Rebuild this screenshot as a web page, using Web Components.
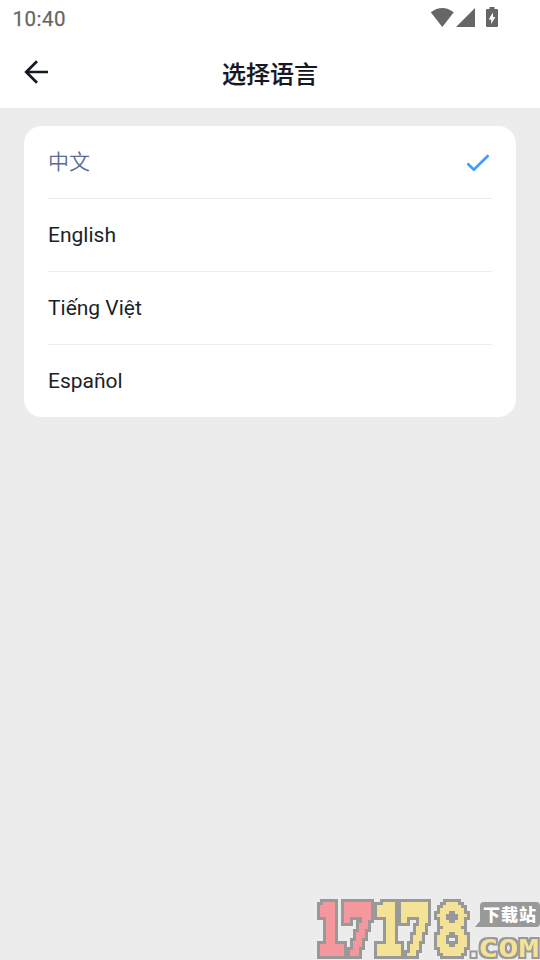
<!DOCTYPE html>
<html lang="zh"><head><meta charset="utf-8"><title>选择语言</title>
<style>html,body{margin:0;height:100%;overflow:hidden;background:#ececec}</style></head>
<body><language-screen></language-screen>
<script>
const define = (name, html) => customElements.define(name, class extends HTMLElement {
  constructor() {
    super();
    const t = document.createElement('template');
    t.innerHTML = html;
    this.attachShadow({mode: 'open'}).append(t.content.cloneNode(true));
  }
});

define('status-bar', `<style>
:host{display:flex;height:36px;box-sizing:border-box;padding:0 41px 0 12px;align-items:center;justify-content:space-between;background:#fff;color:#666}
span{font:400 20.5px/36px Roboto,sans-serif;letter-spacing:.5px;padding:1px 0 0 .5px;-webkit-text-stroke:.25px #666}
svg{display:block;margin-top:-1px}
</style><span>10:40</span>
<svg width="69" height="24" viewBox="430 6 69 24" fill="#666"><path d="M430.8 12.2Q442.3 3.6 453.8 12.2L442.3 27Z"/><path d="M475 8V27H456Z"/>
<path fill-rule="evenodd" d="M489.5 7h5v2h2.4q1.1 0 1.1 1.1v15.7q0 1.2-1.1 1.2h-9.8q-1.1 0-1.1-1.2V10.100q0-1.100 1.100-1.100h2.400zM493 12.500l-4.400 7h2.600v4.500l4.200-7h-2.400z"/></svg>`);

define('title-bar', `<style>
:host{display:grid;grid-template-columns:72px 1fr 72px;height:72px;align-items:center;background:#fff;color:#141824}
svg{display:block;margin-left:24px}
h1{margin:0;text-align:center;font:500 24px/36px Roboto,"Noto Sans CJK SC",sans-serif;padding-top:6px;-webkit-text-stroke:.2px #141824}
</style><svg width="25" height="24" viewBox="0 0 25 24" fill="none" stroke="#141824" stroke-width="2.700"><path d="M24 12H2M13 1.200L2.200 12L13 22.800"/></svg><h1><slot></slot></h1>`);

define('language-option', `<style>
:host{display:flex;height:72px;align-items:center;justify-content:space-between;border-bottom:1px solid #ececec;color:#1b1f29;font:400 21px/30px Roboto,"Noto Sans CJK SC",sans-serif}
:host(:last-child){border-bottom:0}
:host([selected]){color:#576b95;font-weight:350}
svg{display:none;margin:1px 2.500px 0 0}
:host([selected]) svg{display:block}
</style><span><slot></slot></span><svg width="24" height="20" viewBox="0 0 24 20" fill="none" stroke="#3f9bff" stroke-width="2.700"><path d="M1.500 10.500L7.800 16.700L22.500 2.200"/></svg>`);

define('language-list', `<style>
:host{display:block;margin:18px 24px;padding:0 24px;background:#fff;border-radius:18px}
</style><slot></slot>`);

define('site-mark', `<style>
:host{position:absolute;right:0;bottom:0;width:226px;height:64px}
svg{display:block}
.n{font:700 70px "DejaVu Serif",serif;stroke-width:4px}
.n .m{font-family:"DejaVu Sans Mono",monospace;stroke-width:4px}
.c{font:700 25px "DejaVu Sans Mono",monospace}
.s{font:900 17px "Noto Sans CJK SC",sans-serif;fill:#fff}
.r{fill:#f4989e;stroke:#f4989e}
.y{fill:#f4e397;stroke:#f4e397}
</style><svg width="226" height="64" viewBox="314 896 226 64">
<defs>
<filter id="px3" filterUnits="userSpaceOnUse" x="314" y="896" width="226" height="64" color-interpolation-filters="sRGB">
<feFlood x="315" y="897" width="1" height="1" flood-color="#000"/><feOffset x="314" y="896" width="3" height="3" result="cell"/><feTile in="cell" result="grid"/>
<feComponentTransfer in="SourceGraphic" result="solid"><feFuncA type="discrete" tableValues="0 1"/></feComponentTransfer>
<feComposite in="solid" in2="grid" operator="in"/><feMorphology operator="dilate" radius="1" result="face"/>
<feMorphology in="face" operator="dilate" radius="3" result="wide"/><feFlood flood-color="#999"/><feComposite in2="wide" operator="in" result="edge"/>
<feMerge><feMergeNode in="edge"/><feMergeNode in="face"/></feMerge></filter>
<filter id="edge2" filterUnits="userSpaceOnUse" x="314" y="896" width="226" height="64" color-interpolation-filters="sRGB">
<feMorphology in="SourceAlpha" operator="dilate" radius="2" result="wide"/><feFlood flood-color="#999"/><feComposite in2="wide" operator="in" result="edge"/>
<feMerge><feMergeNode in="edge"/><feMergeNode in="SourceGraphic"/></feMerge></filter>
</defs>
<g class="n" filter="url(#px3)"><text class="r m" x="316" y="955" textLength="29" lengthAdjust="spacingAndGlyphs">1</text><text class="r" x="341" y="955" textLength="33" lengthAdjust="spacingAndGlyphs">7</text><text class="y m" x="374" y="955" textLength="29" lengthAdjust="spacingAndGlyphs">1</text><text class="y" x="399" y="955" textLength="33" lengthAdjust="spacingAndGlyphs">7</text><text class="y m" style="stroke-width:1px" x="434" y="955" textLength="36" lengthAdjust="spacingAndGlyphs">8</text></g>
<g filter="url(#edge2)"><text class="c" fill="#eee" x="466" y="957">.</text>
<text class="c y" style="stroke:none" x="478" y="957" textLength="61" lengthAdjust="spacingAndGlyphs">COM</text></g>
<path fill="#999" d="M484 902H536Q540 902 540 906V923Q540 927 536 927H475L480 921V906Q480 902 484 902Z"/>
<text class="s" x="483" y="921" textLength="53">下载站</text></svg>`);

define('language-screen', `<style>
:host{display:block;position:relative;height:960px;overflow:hidden;background:#ececec}
</style><status-bar></status-bar><title-bar>选择语言</title-bar>
<language-list><language-option selected>中文</language-option><language-option>English</language-option><language-option>Tiếng Việt</language-option><language-option>Español</language-option></language-list>
<site-mark></site-mark>`);
</script></body></html>
